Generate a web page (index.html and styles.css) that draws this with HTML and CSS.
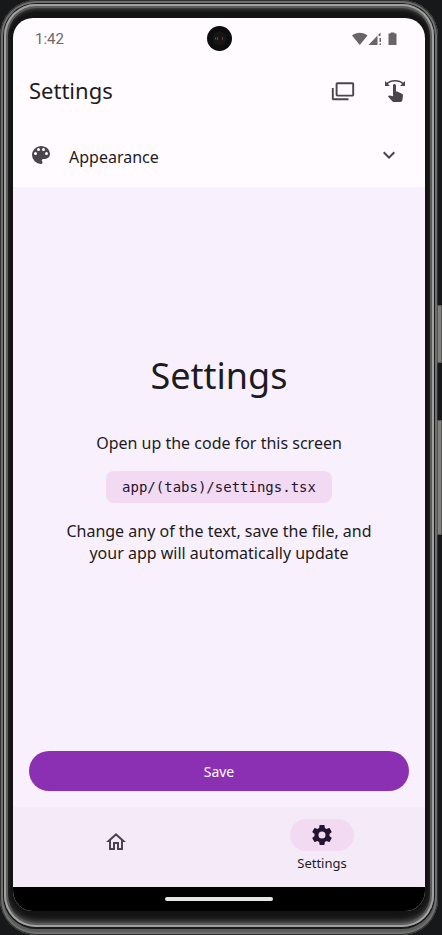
FILE: index.html
```html
<!DOCTYPE html>
<html lang="en">
<head>
<meta charset="utf-8">
<meta name="viewport" content="width=device-width, initial-scale=1">
<title>Settings</title>
<link rel="stylesheet" href="styles.css">
</head>
<body>
<div class="phone">
  <span class="side-key side-key-power"></span>
  <span class="side-key side-key-volume"></span>
  <div class="bezel">
    <div class="screen">
      <div class="status-bar">
        <span class="clock">1:42</span>
        <svg class="camera" viewBox="0 0 25 25" aria-hidden="true">
          <circle cx="12.500" cy="12.500" r="12.500" fill="#0c0d0c"/>
          <circle cx="12.500" cy="12.500" r="7" fill="#151615"/>
          <path d="M10.500 11v3M8.500 11.500v2" stroke="#5c5434" fill="none"/>
          <path d="M15.500 11v3" stroke="#6b3a20" fill="none"/>
        </svg>
        <svg class="status-icons" viewBox="0 0 46 16" aria-hidden="true">
          <path d="M0 4.500C4.500.800 11 .800 15.500 4.500L7.800 14z"/>
          <path d="M16.500 14L25.500 4.500V14z"/>
          <path d="M26.500 3.500l2-2V5h-2zM27.500 7H29v4h-1.500zM27.500 12.500H29V14h-1.500z"/>
          <path d="M36.500 2.500h2V1.500h4v1h2V14h-8z"/>
        </svg>
      </div>

      <header class="app-bar">
        <h1 class="app-title">Settings</h1>
        <button class="icon-button" type="button" aria-label="Open modal">
          <svg class="icon" viewBox="0 0 24 24"><path d="M6.400 4.200h15a.8.8 0 0 1 .8.8v10.800a.8.8 0 0 1-.8.8h-15a.8.8 0 0 1-.8-.8V5a.8.8 0 0 1 .8-.8M1.800 9v10.400a.8.8 0 0 0 .8.8H17.500" fill="none" stroke="currentColor" stroke-width="1.900"/></svg>
        </button>
        <button class="icon-button" type="button" aria-label="Swipe gestures">
          <svg class="icon" viewBox="0 0 24 24"><path d="M18.890 14.750l-4.090-2.040c-.28-.14-.58-.21-.89-.21H13v-6c0-.83-.67-1.500-1.500-1.500S10 5.670 10 6.500v10.740l-3.250-.74c-.33-.07-.68.03-.92.28l-.83.84 4.540 4.790c.38.38 1.140.59 1.670.59h6.160c1 0 1.840-.73 1.980-1.720l.63-4.460c.12-.85-.32-1.690-1.090-2.070zM20.130 3.870C18.690 2.170 15.600 1 12 1S5.310 2.170 3.870 3.870L2 2v5h5L4.930 4.930c1-1.290 3.700-2.430 7.070-2.430s6.070 1.140 7.070 2.430L17 7h5V2z"/></svg>
        </button>
      </header>

      <button class="accordion" type="button" aria-expanded="false">
        <svg class="icon" viewBox="0 0 24 24"><path d="M17.5,12A1.5,1.5 0 0,1 16,10.5A1.5,1.5 0 0,1 17.5,9A1.5,1.5 0 0,1 19,10.5A1.5,1.5 0 0,1 17.5,12M14.5,8A1.5,1.5 0 0,1 13,6.5A1.5,1.5 0 0,1 14.5,5A1.5,1.5 0 0,1 16,6.5A1.5,1.5 0 0,1 14.5,8M9.5,8A1.5,1.5 0 0,1 8,6.5A1.5,1.5 0 0,1 9.5,5A1.5,1.5 0 0,1 11,6.5A1.5,1.5 0 0,1 9.5,8M6.5,12A1.5,1.5 0 0,1 5,10.5A1.5,1.5 0 0,1 6.500,9A1.5,1.5 0 0,1 8,10.5A1.5,1.5 0 0,1 6.5,12M12,3A9,9 0 0,0 3,12A9,9 0 0,0 12,21A1.5,1.5 0 0,0 13.5,19.5C13.5,19.11 13.35,18.76 13.11,18.5C12.88,18.23 12.73,17.88 12.73,17.5A1.5,1.5 0 0,1 14.23,16H16A5,5 0 0,0 21,11C21,6.58 16.97,3 12,3Z"/></svg>
        <span class="accordion-label">Appearance</span>
        <svg class="icon" viewBox="0 0 24 24"><path d="M7.410 8.580L12 13.170l4.590-4.590L18 10l-6 6-6-6z"/></svg>
      </button>

      <main class="content">
        <h2 class="headline">Settings</h2>
        <p class="text">Open up the code for this screen</p>
        <code class="path-chip">app/(tabs)/settings.tsx</code>
        <p class="text">Change any of the text, save the file, and your app will automatically update</p>
      </main>

      <div class="actions">
        <button class="save-button" type="button">Save</button>
      </div>

      <nav class="tab-bar">
        <a class="tab tab-idle" href="#home" aria-label="Home">
          <span class="tab-pill"><svg class="icon" viewBox="0 0 24 24"><path d="M12 5.690l5 4.500V18h-2v-6H9v6H7v-7.810l5-4.500M12 3L2 12h3v8h6v-6h2v6h6v-8h3z"/></svg></span>
        </a>
        <a class="tab tab-active" href="#settings" aria-current="page">
          <span class="tab-pill"><svg class="icon" viewBox="0 0 24 24"><path d="M12,15.5A3.5,3.5 0 0,1 8.5,12A3.5,3.5 0 0,1 12,8.5A3.5,3.5 0 0,1 15.5,12A3.5,3.5 0 0,1 12,15.5M19.43,12.97C19.47,12.65 19.5,12.33 19.5,12C19.5,11.67 19.47,11.34 19.43,11L21.54,9.37C21.73,9.22 21.78,8.95 21.66,8.73L19.66,5.27C19.54,5.05 19.27,4.96 19.05,5.05L16.56,6.05C16.04,5.66 15.5,5.32 14.87,5.07L14.5,2.42C14.46,2.18 14.25,2 14,2H10C9.75,2 9.54,2.18 9.5,2.42L9.13,5.07C8.5,5.32 7.96,5.66 7.44,6.05L4.95,5.05C4.73,4.96 4.46,5.05 4.34,5.27L2.34,8.73C2.21,8.95 2.27,9.22 2.46,9.37L4.57,11C4.53,11.34 4.5,11.67 4.5,12C4.5,12.33 4.53,12.65 4.57,12.97L2.46,14.63C2.27,14.78 2.21,15.05 2.34,15.27L4.34,18.73C4.46,18.95 4.73,19.03 4.95,18.95L7.44,17.94C7.96,18.34 8.5,18.68 9.13,18.93L9.5,21.58C9.54,21.82 9.75,22 10,22H14C14.25,22 14.46,21.82 14.5,21.58L14.87,18.93C15.5,18.67 16.04,18.34 16.56,17.94L19.05,18.95C19.27,19.03 19.54,18.95 19.66,18.73L21.66,15.27C21.78,15.05 21.73,14.78 21.54,14.63L19.43,12.97Z"/></svg></span>
          <span class="tab-label">Settings</span>
        </a>
      </nav>

      <div class="gesture-bar"><span class="gesture-handle"></span></div>
    </div>
  </div>
</div>
</body>
</html>
```
FILE: styles.css
```css
* {
  box-sizing: border-box;
}

body {
  margin: 0;
  padding-right: 4px;
  background: #17181a;
  color: #1d1b1e;
  font-family: "Noto Sans", sans-serif;
}

button {
  border: 0;
  padding: 0;
  background: none;
  color: inherit;
  font: inherit;
}

h1,
h2,
p {
  margin: 0;
  font-weight: 400;
}

/* Device frame */

.phone {
  position: relative;
  display: flex;
  min-height: 100vh;
  padding: 4px 4px 8px;
  border-radius: 36px;
  background: #1a1b1a;
  box-shadow: inset 0 0 0 1px #2f302f, inset 0 0 0 3px #6f706e, inset 0 -3px 0 3px #5c5d5b;
}

.bezel {
  display: flex;
  flex: 1;
  padding: 14px 9px 16px;
  border-radius: 32px;
  background: #131413;
  box-shadow: inset 0 0 0 2px #a0a1a0, inset 0 0 0 4px #5b5c5b, inset 0 4px 5px #6a6b6a, inset 0 -5px 6px #6a6b6a;
}

.side-key {
  position: absolute;
  right: -4px;
  width: 5px;
  border: 1px solid #555654;
  background: #80817f;
}

.side-key-power {
  top: 305px;
  height: 58px;
}

.side-key-volume {
  top: 420px;
  height: 115px;
}

.screen {
  display: flex;
  flex: 1;
  flex-direction: column;
  overflow: hidden;
  border-radius: 20px;
  background: #fffbff;
}

/* Status bar */

.status-bar {
  display: grid;
  grid-template-columns: 1fr 25px 1fr;
  align-items: center;
  height: 41px;
  padding: 0 22px;
}

.clock {
  color: #6b696c;
  font-family: Roboto, sans-serif;
  font-size: 15px;
}

.camera {
  width: 25px;
  height: 25px;
}

.status-icons {
  justify-self: end;
  width: 46px;
  height: 16px;
  margin-right: 5px;
  fill: #676568;
}

/* Header */

.icon {
  flex: none;
  display: block;
  width: 24px;
  height: 24px;
  fill: currentColor;
}

.app-bar {
  display: flex;
  align-items: center;
  gap: 28px;
  height: 64px;
  padding: 0 18px 0 16px;
}

.app-title {
  flex: 1;
  padding-bottom: 2px;
  font-size: 22px;
  line-height: 28px;
}

.icon-button {
  color: #4b444d;
}

.accordion {
  display: flex;
  align-items: center;
  gap: 16px;
  height: 64px;
  padding: 0 24px 0 16px;
  color: #4b444d;
}

.accordion-label {
  flex: 1;
  padding-top: 4px;
  color: #1d1b1e;
  font-size: 16px;
  line-height: 24px;
  text-align: left;
}

/* Page body */

.content {
  display: flex;
  flex: 1;
  flex-direction: column;
  align-items: center;
  justify-content: center;
  gap: 17px;
  padding: 0 48px 4px;
  background: #f8f1fd;
  text-align: center;
}

.headline {
  margin-bottom: 17px;
  font-size: 36px;
  line-height: 44px;
}

.text {
  font-size: 16px;
  line-height: 22px;
}

.path-chip {
  padding: 0 16px;
  border-radius: 8px;
  background: #f1daf2;
  color: #251431;
  font-family: "DejaVu Sans Mono", monospace;
  font-size: 14px;
  line-height: 32px;
}

.actions {
  display: flex;
  padding: 16px;
  background: #f8f1fd;
}

.save-button {
  flex: 1;
  height: 40px;
  border-radius: 20px;
  background: #8c30b3;
  color: #ffffff;
  font-size: 14px;
}

/* Bottom navigation */

.tab-bar {
  display: flex;
  height: 80px;
  padding-top: 12px;
  background: #f5eaf8;
}

.tab {
  display: flex;
  flex: 1;
  flex-direction: column;
  align-items: center;
  gap: 4px;
  color: #4b444d;
  text-decoration: none;
}

.tab-idle {
  padding-top: 7px;
}

.tab-pill {
  display: flex;
  align-items: center;
  justify-content: center;
  width: 64px;
  height: 32px;
  border-radius: 16px;
}

.tab-active .tab-pill {
  background: #f1daf2;
  color: #251431;
}

.tab-label {
  color: #1d1b1e;
  font-size: 13px;
  line-height: 16px;
}

.gesture-bar {
  display: flex;
  justify-content: center;
  height: 24px;
  padding-top: 10px;
  background: #000000;
}

.gesture-handle {
  width: 108px;
  height: 4px;
  border-radius: 2px;
  background: #e6e6e6;
}
```
